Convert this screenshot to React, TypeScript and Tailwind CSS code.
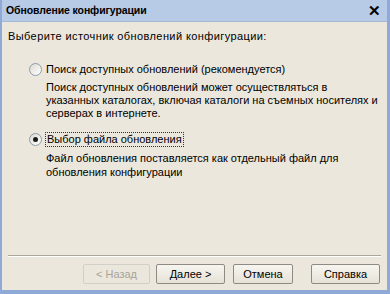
import React from "react"

const font = { fontFamily: "'Liberation Sans', Arial, sans-serif" }

function Radio({ checked }: { checked?: boolean }) {
  return (
    <span className="flex size-[13px] shrink-0 items-center justify-center rounded-full border border-[#8e9bab] bg-gradient-to-br from-[#dcdad2] to-white">
      {checked && <span className="size-[5px] rounded-full bg-[#1b1b1b]" />}
    </span>
  )
}

function Btn({ label, disabled, w }: { label: string; disabled?: boolean; w: string }) {
  return (
    <div
      className={`flex h-[20px] ${w} items-center justify-center rounded-[2px] border text-[11px] ${
        disabled
          ? "border-[#d2cfc6] bg-[#ebe7dc] text-[#a7a49b]"
          : "border-[#8f8b82] bg-gradient-to-b from-[#f7f5f0] to-[#e6e2d7] text-black"
      }`}
    >
      {label}
    </div>
  )
}

export default function App() {
  return (
    <div style={font} className="flex h-[294px] w-[390px] flex-col overflow-hidden border-l-2 border-r-[3px] border-b-4 border-[#8faad6] bg-[#ebe7dc] text-black">
      <div className="flex h-[22px] shrink-0 items-center justify-between border-b border-[#a4b9d8] bg-[#b7cae6] pl-[4px] pr-[6px]">
        <span className="text-[10.5px] font-bold tracking-[-0.1px]">Обновление конфигурации</span>
        <span className="text-[15px] font-bold leading-none">✕</span>
      </div>
      <div className="flex flex-1 flex-col px-[6px] text-[11px] leading-[13px]">
        <p className="mt-[8px] tracking-[0.4px]">Выберите источник обновлений конфигурации:</p>

        <div className="mt-[20px] flex items-center gap-[4px] pl-[21px]">
          <Radio />
          <span>Поиск доступных обновлений (рекомендуется)</span>
        </div>
        <p className="mt-[5px] pl-[38px]">
          Поиск доступных обновлений может осуществляться в указанных каталогах, включая каталоги на съемных носителях и серверах в интернете.
        </p>

        <div className="mt-[12px] flex items-center gap-[3px] pl-[21px]">
          <Radio checked />
          <span className="border border-dotted border-[#333] px-[1px]">Выбор файла обновления</span>
        </div>
        <p className="mt-[4px] pl-[38px] leading-[14px]">
          Файл обновления поставляется как отдельный файл для обновления конфигурации
        </p>

        <div className="mt-auto border-t border-[#aaa69b] shadow-[0_1px_0_#fff]" />
        <div className="mb-[6px] mt-[8px] flex items-center">
          <div className="ml-[75px]">
            <Btn label="< Назад" disabled w="w-[67px]" />
          </div>
          <div className="ml-[6px]">
            <Btn label="Далее >" w="w-[69px]" />
          </div>
          <div className="ml-[8px]">
            <Btn label="Отмена" w="w-[60px]" />
          </div>
          <div className="ml-[18px]">
            <Btn label="Справка" w="w-[69px]" />
          </div>
        </div>
      </div>
    </div>
  )
}
